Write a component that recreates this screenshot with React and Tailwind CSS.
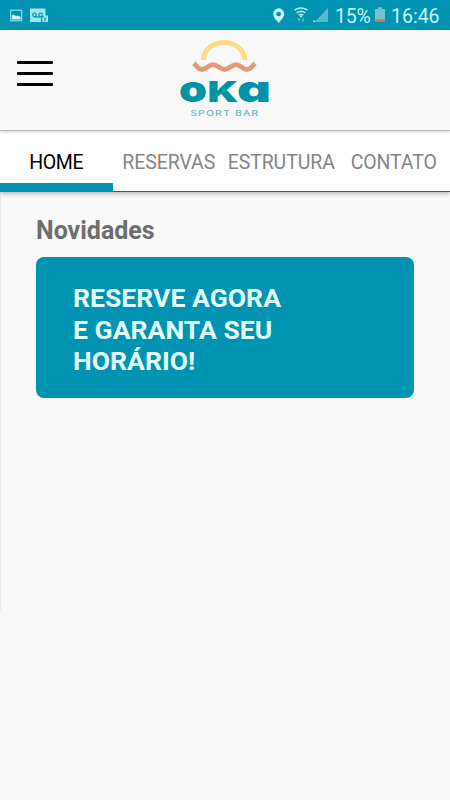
import { useState } from "react";

const tabs = ["HOME", "RESERVAS", "ESTRUTURA", "CONTATO"];

const StatusBar = () => (
  <div className="flex h-[30px] items-center justify-between bg-[#0093b2] text-[#c5f3fa]">
    <svg width="60" height="30" viewBox="0 0 60 30">
      <rect x="10.7" y="10.2" width="11" height="10.6" fill="none" stroke="#8edbe6" strokeWidth="1.2" />
      <path d="M12 19.5v-4l2-1 2 1.8 2-.8 2.6 1.4v2.6z" fill="#c5f3fa" />
      <path d="M30 8.5h15.500v7H48V22H30z" fill="#9fe3ee" />
      <g fill="none" stroke="#0093b2" strokeWidth="1.2">
        <circle cx="34.5" cy="14.8" r="1.8" />
        <circle cx="40.6" cy="14.8" r="1.8" />
        <path d="M34.500 16.800h6M41.700 22v-5.500h2" />
        <path d="M45 17.500v3.500" />
      </g>
    </svg>
    <div className="flex h-full">
      <svg width="75" height="30" viewBox="260 0 75 30">
        <path
          d="M278.700 8.300a5.500 5.500 0 0 0-5.500 5.600c0 3.600 5.500 9 5.500 9s5.500-5.400 5.500-9a5.500 5.500 0 0 0-5.500-5.600zm0 3.400a2.300 2.300 0 1 1 0 4.600 2.300 2.300 0 0 1 0-4.600z"
          fill="#c5f3fa"
          fillRule="evenodd"
        />
        <g fill="none" stroke="#b5eff6" strokeWidth="1.5">
          <path d="M294.500 10.200q6.500-4.600 13 0" />
          <path d="M296.600 12.800q4.400-3.200 8.800 0" />
          <path d="M298.600 15.200q2.400-1.700 4.800 0" />
        </g>
        <circle cx="301" cy="16.300" r="1.100" fill="#c5f3fa" />
        <path d="M297.300 20l1.700-2 1.700 2zM298.500 20h1v2h-1zM301.500 20l1.500 2 1.500-2zM302.600 18h1v2h-1z" fill="#66c4d5" />
        <path d="M328 8v14h-13.500z" fill="#57bacd" />
        <path d="M313.300 20.500h1.500V22h-1.500z" fill="#c5f3fa" />
      </svg>
      <span className="w-[39px] font-[Roboto] text-[19.5px] leading-[33px] tracking-[-0.2px]">15%</span>
      <svg width="17" height="30" viewBox="374 0 17 30">
        <path d="M378 7.300h4V9h3v13h-10V9h3z" fill="#75c4cc" />
        <path d="M375 19.500h10V22h-10z" fill="#c9765c" />
      </svg>
      <span className="w-[59px] font-[Roboto] text-[19.5px] leading-[33px]">16:46</span>
    </div>
  </div>
);

const Logo = () => (
  <svg width="110" height="90" viewBox="170 34 110 90" className="mt-1">
    <path d="M203.200 60a20.800 17.500 0 0 1 41.600 0" fill="none" stroke="#fddc86" strokeWidth="5" />
    <path
      d="M193.800 63.300C197 66 198.500 69.500 202 69.500C206 69.500 208.500 64.700 213 64.700C217.500 64.700 220 69.500 224.500 69.500C229 69.500 231.500 64.700 236 64.700C240.500 64.700 243 69.500 247 69.500C250.500 69.500 252 66 255.200 63.300"
      fill="none"
      stroke="#e59a75"
      strokeWidth="4.8"
    />
    <g fill="#0093a8" className="font-[Inter] font-black">
      <text x="179" y="101.8" fontSize="37" textLength="28" lengthAdjust="spacingAndGlyphs">o</text>
      <text x="207.5" y="101.8" fontSize="28.5" textLength="31" lengthAdjust="spacingAndGlyphs">K</text>
      <text
        x="237"
        y="101.8"
        fontSize="37"
        textLength="34"
        lengthAdjust="spacingAndGlyphs"
        className="[font-feature-settings:'cv11']"
      >
        a
      </text>
    </g>
    <text
      x="190.5"
      y="116"
      fontSize="7.2"
      textLength="69"
      lengthAdjust="spacingAndGlyphs"
      fill="#4fa9b8"
      className="font-[Inter] tracking-[1px]"
    >
      SPORT BAR
    </text>
  </svg>
);

const App = () => {
  const [active, setActive] = useState("HOME");

  return (
    <div className="min-h-screen bg-[#f8f8f8] font-[Roboto,sans-serif]">
      <StatusBar />
      <header className="relative z-10 flex h-[101px] border-b border-[#bcbcbc] bg-[#f8f8f8] shadow-[0_1px_3px_rgba(0,0,0,0.2)]">
        <button aria-label="Menu" className="ml-[17px] mt-[31px] flex h-[25px] w-9 flex-col justify-between">
          <span className="h-[3px] w-full rounded-[1px] bg-black" />
          <span className="h-[3px] w-full rounded-[1px] bg-black" />
          <span className="h-[3px] w-full rounded-[1px] bg-black" />
        </button>
        <div className="ml-[117px]">
          <Logo />
        </div>
      </header>
      <nav className="relative flex h-[61px] border-b border-[#555] bg-white shadow-[0_2px_4px_rgba(0,0,0,0.25)]">
        {tabs.map((tab) => (
          <button
            key={tab}
            onClick={() => setActive(tab)}
            className={
              tab === active
                ? "-mb-px flex-1 basis-0 border-b-9 border-[#0093b2] pt-[11px] text-[19.5px] tracking-[-0.4px] text-black"
                : "flex-1 basis-0 pt-[3px] text-[19.5px] tracking-[-0.1px] text-[#858585]"
            }
          >
            {tab}
          </button>
        ))}
      </nav>
      <main className="h-[418px] border-l border-[#e9e9e9] pl-[35px] pr-9 pt-6">
        <h1 className="text-[25px] font-bold leading-[30px] text-[#6e6e6e]">Novidades</h1>
        <div className="mt-[11px] h-[141px] rounded-lg bg-[#0093b2] pl-[37px] pt-[25px] text-[26.5px] font-bold leading-[31.5px] tracking-[0.05px] text-[#e3ffff]">
          <p>RESERVE AGORA</p>
          <p>E GARANTA SEU</p>
          <p>HORÁRIO!</p>
        </div>
      </main>
    </div>
  );
};

export default App;
